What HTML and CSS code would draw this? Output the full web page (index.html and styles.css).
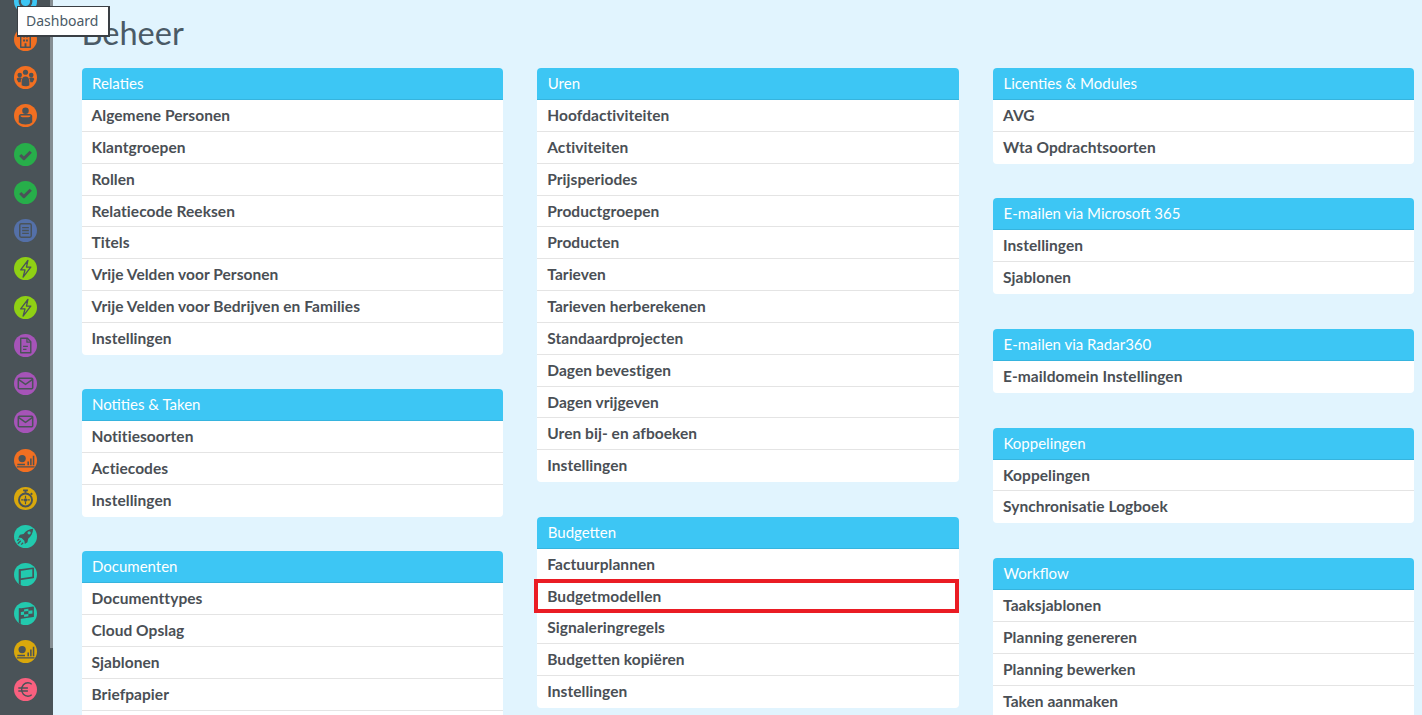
FILE: index.html
```html
<!DOCTYPE html>
<html lang="nl">
<head>
<meta charset="utf-8">
<title>Beheer</title>
<link rel="stylesheet" href="styles.css">
</head>
<body>
<div class="app">
<nav class="rail">
<div class="rail-track">
<span class="dot blue"><svg viewBox="0 0 24 24"><circle class="s" cx="12" cy="12" r="6" stroke-width="2.4"/></svg></span>
<span class="dot orange"><svg viewBox="0 0 24 24"><path class="s" d="M7 5h10v15H7z" stroke-width="1.500"/><path class="f" d="M9.500 8h2v2h-2zM12.500 8h2v2h-2zM9.500 12h2v2h-2zM12.500 12h2v2h-2zM11 16h2v4h-2z"/></svg></span>
<span class="dot orange"><svg viewBox="0 0 24 24"><circle class="f" cx="6" cy="9.500" r="2.400"/><circle class="f" cx="18" cy="9.500" r="2.400"/><circle class="f" cx="12" cy="6.500" r="2.700"/><path class="f" d="M2.800 13.500c.5-1 1.800-1.500 3.200-1.500s2 .4 2.200.8c-.8 1-1.200 2.400-1.200 4.200H4.500zM21.200 13.500c-.5-1-1.800-1.500-3.200-1.500s-2 .4-2.200.8c.8 1 1.200 2.400 1.200 4.200h2.500z"/><path class="f" d="M8 20v-4c0-3 1.500-5 4-5s4 2 4 5v4c-1 .7-2.400 1-4 1s-3-.3-4-1z"/></svg></span>
<span class="dot orange"><svg viewBox="0 0 24 24"><circle class="f" cx="12" cy="7" r="3.400"/><path class="f" d="M5 13c0-1.500 1-2.500 2.500-2.500h9c1.500 0 2.500 1 2.500 2.500v6c-1.800 1.500-4.300 2.300-7 2.300s-5.200-.8-7-2.300z"/><path class="h" d="M6.800 12h10.400c0 1-.8 1.800-2 1.800H8.800c-1.200 0-2-.8-2-1.800z"/></svg></span>
<span class="dot green"><svg viewBox="0 0 24 24"><path class="s" d="M6.500 12.500l3.800 3.800 7.200-7.200" stroke-width="3.200"/></svg></span>
<span class="dot green"><svg viewBox="0 0 24 24"><path class="s" d="M6.500 12.500l3.800 3.800 7.200-7.200" stroke-width="3.200"/></svg></span>
<span class="dot indigo"><svg viewBox="0 0 24 24"><rect class="s" x="6" y="5" width="12" height="14" rx="1.500" stroke-width="1.500"/><path class="s" d="M8.500 9h7M8.500 12h7M8.500 15h7" stroke-width="1.500"/></svg></span>
<span class="dot lime"><svg viewBox="0 0 24 24"><path class="s" d="M14.500 3.500L7 13.500h4.500l-2 7.500 8-10.500h-4.500z" stroke-width="1.400"/></svg></span>
<span class="dot lime"><svg viewBox="0 0 24 24"><path class="s" d="M14.500 3.500L7 13.500h4.500l-2 7.500 8-10.500h-4.500z" stroke-width="1.400"/></svg></span>
<span class="dot purple"><svg viewBox="0 0 24 24"><path class="s" d="M7 4.500h7l3.500 3.500v11.500H7z" stroke-width="1.500"/><path class="s" d="M13.500 4.500v4h4M9.500 13h5M9.500 16h3.500" stroke-width="1.300"/></svg></span>
<span class="dot purple"><svg viewBox="0 0 24 24"><rect class="s" x="4.500" y="6.500" width="15" height="11" rx="1" stroke-width="1.600"/><path class="s" d="M5 8l7 5 7-5" stroke-width="1.500"/></svg></span>
<span class="dot purple"><svg viewBox="0 0 24 24"><rect class="s" x="4.500" y="6.500" width="15" height="11" rx="1" stroke-width="1.600"/><path class="s" d="M5 8l7 5 7-5" stroke-width="1.500"/></svg></span>
<span class="dot orange"><svg viewBox="0 0 24 24"><circle class="f" cx="8.500" cy="10" r="3.800"/><path class="f" d="M14 13h1.600v4H14zM16.800 10h1.600v7h-1.600zM19.600 7h1.600v10h-1.600zM3.500 15.500h8V17h-8zM3 18h18.500v1.400H3z"/></svg></span>
<span class="dot gold"><svg viewBox="0 0 24 24"><circle class="s" cx="12" cy="13.500" r="6.800" stroke-width="2"/><path class="s" d="M9.500 3.500h5M12 3.500V6M17.500 6.500l1.500 1.500" stroke-width="2"/><circle class="f" cx="12" cy="13.500" r="1.800"/><path class="s" d="M12 9v2.500M12 15.500V18M7.500 13.500h2.500M14 13.500h2.500" stroke-width="1.200"/></svg></span>
<span class="dot teal"><svg viewBox="0 0 24 24"><path class="f" d="M20 4c-4.200.2-7.500 2-10 5.500l-3.800.8L4.500 13l3.400.5 2.900 2.900.5 3.400 2.700-1.700.8-3.800C17.900 12.200 19.800 8.500 20 4z"/><path class="s" d="M7 16.500l-3 3M5.500 14.500l-2 2M9.500 18.500l-2 2" stroke-width="1.400"/><circle class="h" cx="15.800" cy="8.200" r="1.700"/></svg></span>
<span class="dot teal"><svg viewBox="0 0 24 24"><path class="s" d="M6 23V6.500" stroke-width="2"/><path class="s" d="M6 7.500L20 5.500v9.500L6 17z" stroke-width="1.800"/></svg></span>
<span class="dot teal"><svg viewBox="0 0 24 24"><path class="s" d="M6 23V6.500" stroke-width="2"/><path class="s" d="M6 7.500L20 5.500v9.500L6 17z" stroke-width="1.500"/><path class="f" d="M6 7.500l4.500-.6v3.100l-4.500.6zM15 6.200l5-.7v3.100l-5 .6zM10.500 10l4.500-.6v3.100l-4.500.5zM6 13.800l4.500-.5v3L6 17zM15 12.500l5-.6V15l-5 .6z"/></svg></span>
<span class="dot gold"><svg viewBox="0 0 24 24"><circle class="f" cx="8.500" cy="10" r="3.800"/><path class="f" d="M14 13h1.600v4H14zM16.800 10h1.600v7h-1.600zM19.600 7h1.600v10h-1.600zM3.500 15.500h8V17h-8zM3 18h18.500v1.400H3z"/></svg></span>
<span class="dot pink"><svg viewBox="0 0 24 24"><path class="s" d="M18.500 6.500c-1.200-1-2.500-1.500-4-1.500-3.800 0-6.500 3-6.500 7s2.700 7 6.500 7c1.500 0 2.800-.5 4-1.500M4.500 10.500h10M4.500 13.500h10" stroke-width="1.500"/></svg></span>
</div>
<div class="rail-scroll"></div>
</nav>
<main class="content">
<h1 class="title">Beheer</h1>
<div class="columns">
<div class="column">
<section class="card"><h2 class="card-head">Relaties</h2><ul class="list"><li>Algemene Personen</li><li>Klantgroepen</li><li>Rollen</li><li>Relatiecode Reeksen</li><li>Titels</li><li>Vrije Velden voor Personen</li><li>Vrije Velden voor Bedrijven en Families</li><li>Instellingen</li></ul></section>
<section class="card"><h2 class="card-head">Notities &amp; Taken</h2><ul class="list"><li>Notitiesoorten</li><li>Actiecodes</li><li>Instellingen</li></ul></section>
<section class="card"><h2 class="card-head">Documenten</h2><ul class="list"><li>Documenttypes</li><li>Cloud Opslag</li><li>Sjablonen</li><li>Briefpapier</li><li>Instellingen</li></ul></section>
</div>
<div class="column">
<section class="card"><h2 class="card-head">Uren</h2><ul class="list"><li>Hoofdactiviteiten</li><li>Activiteiten</li><li>Prijsperiodes</li><li>Productgroepen</li><li>Producten</li><li>Tarieven</li><li>Tarieven herberekenen</li><li>Standaardprojecten</li><li>Dagen bevestigen</li><li>Dagen vrijgeven</li><li>Uren bij- en afboeken</li><li>Instellingen</li></ul></section>
<section class="card"><h2 class="card-head">Budgetten</h2><ul class="list"><li>Factuurplannen</li><li class="marked">Budgetmodellen</li><li>Signaleringregels</li><li>Budgetten kopiëren</li><li>Instellingen</li></ul></section>
</div>
<div class="column column-loose">
<section class="card"><h2 class="card-head">Licenties &amp; Modules</h2><ul class="list"><li>AVG</li><li>Wta Opdrachtsoorten</li></ul></section>
<section class="card"><h2 class="card-head">E-mailen via Microsoft 365</h2><ul class="list"><li>Instellingen</li><li>Sjablonen</li></ul></section>
<section class="card"><h2 class="card-head">E-mailen via Radar360</h2><ul class="list"><li>E-maildomein Instellingen</li></ul></section>
<section class="card"><h2 class="card-head">Koppelingen</h2><ul class="list"><li>Koppelingen</li><li>Synchronisatie Logboek</li></ul></section>
<section class="card"><h2 class="card-head">Workflow</h2><ul class="list"><li>Taaksjablonen</li><li>Planning genereren</li><li>Planning bewerken</li><li>Taken aanmaken</li><li>Instellingen</li></ul></section>
</div>
</div>
</main>
<div class="tooltip">Dashboard</div>
</div>
</body>
</html>
```

FILE: styles.css
```css
* { box-sizing: border-box; }
html, body { margin: 0; height: 100%; overflow: hidden; }
body { font-family: Lato, "Noto Sans", sans-serif; background: #e1f4fe; color: #4a5358; }
.app { display: flex; height: 715px; overflow: hidden; position: relative; }
.rail { flex: 0 0 53px; background: #4a5358; overflow: hidden; position: relative; }
.rail-scroll { position: absolute; top: 0; right: 0; width: 3px; height: 648px; background: #858d92; }
.rail-track { display: flex; flex-direction: column; gap: 15.250px; padding-left: 14px; margin-top: -10.300px; }
.dot { flex: none; display: block; width: 23px; height: 23px; border-radius: 50%; overflow: hidden; }
.dot svg { display: block; width: 23px; height: 23px; }
.dot svg .f { fill: #4a5358; stroke: none; }
.dot svg .s { stroke: #4a5358; fill: none; stroke-linejoin: round; }
.dot.blue { background: #3dc6f4; }
.dot.orange { background: #f26f21; }
.dot.green { background: #27ae4a; }
.dot.indigo { background: #5470a8; }
.dot.lime { background: #8fd014; }
.dot.purple { background: #a654b8; }
.dot.gold { background: #d9a80c; }
.dot.teal { background: #22c9ae; }
.dot.pink { background: #f9607f; }
.dot.orange .h { fill: #f26f21; }
.dot.teal .h { fill: #22c9ae; }
.content { flex: 1; padding: 0 8px 0 28.500px; min-width: 0; }
.title { margin: 13px 0 16px; font-size: 32.500px; line-height: 39px; font-weight: 400; color: #4a5a66; }
.columns { display: grid; grid-template-columns: repeat(3, 421.250px); column-gap: 34.500px; align-items: start; }
.column { display: flex; flex-direction: column; gap: 34.600px; }
.column-loose { gap: 34.800px; }
.card { background: #fff; border-radius: 4px; }
.card-head { margin: 0; height: 32px; padding: 0 10.500px; background: #3dc6f4; border-bottom: 1px solid #36b4de; border-radius: 4px 4px 0 0; color: #fff; font-size: 15px; font-weight: 400; line-height: 30.200px; }
.list { list-style: none; margin: 0; padding: 0; }
.list li { height: 31.850px; padding: 0 10px; border-bottom: 1px solid #e4e4e4; font-size: 15.500px; letter-spacing: .05px; font-weight: 700; line-height: 30.100px; color: #4a4f55; }
.list li:last-child { border-bottom: 0; }
.list li.marked { position: relative; }
.list li.marked::after { content: ""; position: absolute; left: -3.500px; right: 0; top: -1.600px; bottom: -2px; border: 4px solid #ea1c24; pointer-events: none; }
.tooltip { position: absolute; left: 17px; top: 6px; width: 93px; height: 31px; background: #fff; border: 1px solid #3a3f44; border-width: 1px 2px 2px 1px; font-family: "Noto Sans", sans-serif; font-size: 14px; line-height: 28px; padding-left: 8px; color: #4a5a66; }
```
